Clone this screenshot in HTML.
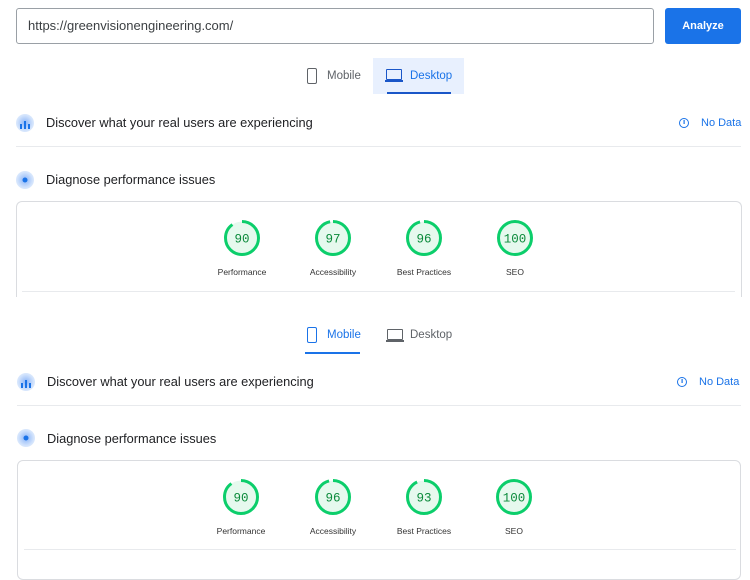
<!DOCTYPE html>
<html><head><meta charset="utf-8"><style>
*{margin:0;padding:0;box-sizing:border-box}
body{width:750px;height:560px;background:#fff;font-family:"Liberation Sans",sans-serif;position:relative;overflow:hidden;color:#202124}
.a{position:absolute}
.input{left:16px;top:8px;width:638px;height:36px;border:1px solid #9aa0a6;border-radius:3px;font-size:13px;line-height:34px;padding-left:11px;color:#3c4043}
.btn{left:665px;top:8px;width:76px;height:36px;background:#1a73e8;border-radius:3px;color:#fff;font-size:11px;font-weight:bold;text-align:center;line-height:36px}
.tab{font-size:11.5px;color:#5f6368}
.blue{color:#1a73e8}
.h{font-size:12.8px;color:#202124}
.div{height:1px;background:#e8eaed}
.lbl{font-size:8.5px;color:#333;width:90px;text-align:center}
.num{font-family:"Liberation Mono",monospace;font-size:12.5px;fill:#0a8a3a}
.card{border:1px solid #dadce0;border-radius:6px}
.ic{width:18px;height:18px;border-radius:50%;background:radial-gradient(circle,#8ab4f8 0,#d2e3fc 60%,#eef4fe 100%)}
</style></head><body>
<div class="a input">https://greenvisionengineering.com/</div>
<div class="a btn">Analyze</div>

<div class="a" style="left:373px;top:58px;width:91px;height:36px;background:#e8f0fe"></div>
<div class="a" style="left:387px;top:92px;width:64px;height:2px;background:#1a56c8"></div>
<div class="a" style="left:307px;top:68px;width:10px;height:16px;border:1.5px solid #5f6368;border-radius:2px"></div>
<div class="a tab" style="left:327px;top:70px">Mobile</div>
<div class="a" style="left:386px;top:69px;width:16px;height:11px;border:1.5px solid #1a56c8;border-radius:1px"></div>
<div class="a" style="left:385px;top:80px;width:18px;height:1.5px;background:#1a56c8"></div>
<div class="a tab blue" style="left:410px;top:70px">Desktop</div>

<div class="a ic" style="left:16px;top:114px"></div>
<div class="a h" style="left:46px;top:115px">Discover what your real users are experiencing</div>
<div class="a" style="left:679px;top:118px;width:10px;height:10px;border:1.2px solid #1a73e8;border-radius:50%"></div>
<div class="a blue" style="left:701px;top:117px;font-size:11px">No Data</div>
<div class="a div" style="left:16px;top:146px;width:725px"></div>
<div class="a ic" style="left:16px;top:171px"></div>
<div class="a h" style="left:46px;top:172px">Diagnose performance issues</div>

<div class="a card" style="left:16px;top:201px;width:726px;height:120px;border-bottom:none;border-radius:6px 6px 0 0"></div>
<div class="a" style="left:0;top:297px;width:750px;height:30px;background:#fff"></div>
<div class="a div" style="left:22px;top:291px;width:713px"></div>

<div class="a" style="left:307px;top:327px;width:10px;height:16px;border:1.5px solid #1a73e8;border-radius:2px"></div>
<div class="a tab blue" style="left:327px;top:329px">Mobile</div>
<div class="a" style="left:305px;top:352px;width:55px;height:2px;background:#1a73e8"></div>
<div class="a" style="left:387px;top:329px;width:16px;height:11px;border:1.5px solid #5f6368;border-radius:1px"></div>
<div class="a" style="left:386px;top:340px;width:18px;height:1.5px;background:#5f6368"></div>
<div class="a tab" style="left:410px;top:329px">Desktop</div>

<div class="a ic" style="left:17px;top:373px"></div>
<div class="a h" style="left:47px;top:374px">Discover what your real users are experiencing</div>
<div class="a" style="left:677px;top:377px;width:10px;height:10px;border:1.2px solid #1a73e8;border-radius:50%"></div>
<div class="a blue" style="left:699px;top:376px;font-size:11px">No Data</div>
<div class="a div" style="left:17px;top:405px;width:724px"></div>
<div class="a ic" style="left:17px;top:429px"></div>
<div class="a h" style="left:47px;top:431px">Diagnose performance issues</div>

<div class="a card" style="left:17px;top:460px;width:724px;height:120px"></div>
<div class="a div" style="left:24px;top:549px;width:712px"></div>

<svg class="a" style="left:0;top:0" width="750" height="560">
<g fill="#e6f9ee" stroke="#0cce6b" stroke-width="3">
<circle cx="242" cy="238" r="16.5" stroke-dasharray="93.3 200" transform="rotate(-90 242 238)"/>
<circle cx="333" cy="238" r="16.5" stroke-dasharray="100.6 200" transform="rotate(-90 333 238)"/>
<circle cx="424" cy="238" r="16.5" stroke-dasharray="99.5 200" transform="rotate(-90 424 238)"/>
<circle cx="515" cy="238" r="16.5"/>
<circle cx="241" cy="497" r="16.5" stroke-dasharray="93.3 200" transform="rotate(-90 241 497)"/>
<circle cx="333" cy="497" r="16.5" stroke-dasharray="99.5 200" transform="rotate(-90 333 497)"/>
<circle cx="424" cy="497" r="16.5" stroke-dasharray="96.4 200" transform="rotate(-90 424 497)"/>
<circle cx="514" cy="497" r="16.5"/>
</g>
<g class="num" text-anchor="middle">
<text x="242" y="242.5">90</text><text x="333" y="242.5">97</text><text x="424" y="242.5">96</text><text x="515" y="242.5">100</text>
<text x="241" y="501.5">90</text><text x="333" y="501.5">96</text><text x="424" y="501.5">93</text><text x="514" y="501.5">100</text>
</g>
<g fill="#1a73e8"><circle cx="25" cy="180" r="2.5"/><circle cx="26" cy="438" r="2.5"/>
<rect x="20" y="124" width="2" height="5"/><rect x="24" y="121" width="2" height="8"/><rect x="28" y="124" width="2" height="5"/>
<rect x="21" y="383" width="2" height="5"/><rect x="25" y="380" width="2" height="8"/><rect x="29" y="383" width="2" height="5"/>
<rect x="683.5" y="120" width="1.2" height="4"/><rect x="681.5" y="379" width="1.2" height="4"/>
</g>
</svg>
<div class="a lbl" style="left:197px;top:267px">Performance</div>
<div class="a lbl" style="left:288px;top:267px">Accessibility</div>
<div class="a lbl" style="left:379px;top:267px">Best Practices</div>
<div class="a lbl" style="left:470px;top:267px">SEO</div>
<div class="a lbl" style="left:196px;top:526px">Performance</div>
<div class="a lbl" style="left:288px;top:526px">Accessibility</div>
<div class="a lbl" style="left:379px;top:526px">Best Practices</div>
<div class="a lbl" style="left:469px;top:526px">SEO</div>
</body></html>
